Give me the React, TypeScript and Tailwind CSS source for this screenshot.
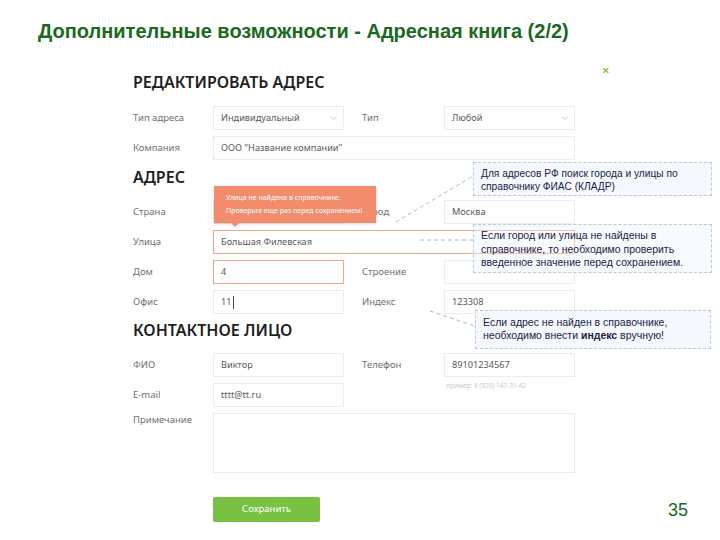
import React from "react";

const Chevron = () => (
  <svg width="7" height="4" viewBox="0 0 7 4" className="ml-auto mr-[6px]">
    <path d="M0.5 0.5 L3.5 3.3 L6.5 0.5" fill="none" stroke="#c8c8c8" strokeWidth="0.9" />
  </svg>
);

type FieldProps = { value?: string; select?: boolean; error?: boolean; wide?: boolean; cursor?: boolean };

const Field = ({ value = "", select, error, wide, cursor }: FieldProps) => (
  <div
    className={`h-[24px] ${wide ? "w-[362px]" : "w-[131px]"} flex items-center pl-[7px] text-[9.2px] text-[#5a5a5a] bg-white ${
      error ? "border border-[#f1a488]" : "border border-[#ececec]"
    }`}
  >
    <span>{value}</span>
    {cursor && <span className="ml-[1px] inline-block w-[1px] h-[13px] bg-[#444]" />}
    {select && <Chevron />}
  </div>
);

const Label = ({ text, second }: { text: string; second?: boolean }) => (
  <div className={`${second ? "w-[82px] ml-[18px]" : "w-[80px]"} text-[9.5px] text-[#707070] shrink-0`}>{text}</div>
);

const Heading = ({ text, className }: { text: string; className?: string }) => (
  <div className={`h-[17px] leading-[17px] text-[16px] font-semibold text-[#1f1f1f] ${className ?? ""}`}>{text}</div>
);

export default function App() {
  return (
    <div className="relative w-[720px] h-[540px] bg-white overflow-hidden font-['Noto_Sans',sans-serif]">
      <h1 className="pl-[38px] pt-[22px] h-[40px] leading-[19px] text-[20px] font-bold text-[#1a6a1e] font-['Liberation_Sans',Arial,sans-serif]">
        Дополнительные возможности - Адресная книга (2/2)
      </h1>

      <div className="ml-[133px] w-[443px] mt-[34px] flex flex-col">
        <div className="flex">
          <Heading text="РЕДАКТИРОВАТЬ АДРЕС" />
        </div>
        <div className="flex flex-col gap-[6px] mt-[15px]">
          <div className="flex items-center">
            <Label text="Тип адреса" />
            <Field value="Индивидуальный" select />
            <Label text="Тип" second />
            <Field value="Любой" select />
          </div>
          <div className="flex items-center">
            <Label text="Компания" />
            <Field value={'ООО "Название компании"'} wide />
          </div>
        </div>

        <Heading text="АДРЕС" className="mt-[9px]" />
        <div className="flex flex-col gap-[6px] mt-[14px]">
          <div className="flex items-center">
            <Label text="Страна" />
            <Field />
            <Label text="Город" second />
            <Field value="Москва" />
          </div>
          <div className="flex items-center">
            <Label text="Улица" />
            <Field value="Большая Филевская" wide error />
          </div>
          <div className="flex items-center">
            <Label text="Дом" />
            <Field value="4" error />
            <Label text="Строение" second />
            <Field />
          </div>
          <div className="flex items-center">
            <Label text="Офис" />
            <Field value="11" cursor />
            <Label text="Индекс" second />
            <Field value="123308" />
          </div>
        </div>

        <Heading text="КОНТАКТНОЕ ЛИЦО" className="mt-[8px]" />
        <div className="flex flex-col gap-[6px] mt-[14px]">
          <div className="flex items-center">
            <Label text="ФИО" />
            <Field value="Виктор" />
            <Label text="Телефон" second />
            <Field value="89101234567" />
          </div>
          <div className="flex items-start">
            <div className="flex items-center">
              <Label text="E-mail" />
              <Field value="tttt@tt.ru" />
            </div>
            <div className="ml-[102px] -mt-[2px] text-[6.5px] text-[#c8c8c8]">пример: 8 (920) 147-31-42</div>
          </div>
          <div className="flex items-start">
            <Label text="Примечание" />
            <div className="w-[362px] h-[60px] border border-[#ececec]" />
          </div>
        </div>
      </div>

      <div className="flex items-center mt-[24px]">
        <button className="ml-[213px] w-[107px] h-[25px] rounded-[2px] bg-[#79c143] text-white text-[9.5px]">Сохранить</button>
        <div className="ml-auto mr-[32px] text-[18px] leading-[18px] text-[#1a6a1e] font-['Liberation_Sans',Arial,sans-serif]">35</div>
      </div>

      {/* close */}
      <div className="absolute left-[602px] top-[64px] text-[13px] font-bold text-[#8cc152] leading-none">×</div>

      {/* error tooltip */}
      <div className="absolute left-[214px] top-[186px] w-[162px] h-[37px] bg-[#f28c6d] shadow-[0_1px_3px_rgba(0,0,0,0.15)] pl-[12px] pt-[6px] text-[7px] leading-[12.5px] text-white">
        <div>Улица не найдена в справочнике.</div>
        <div>Проверьте еще раз перед сохранением!</div>
        <div className="absolute left-[17px] -bottom-[4px] w-0 h-0 border-l-[4px] border-r-[4px] border-t-[4px] border-l-transparent border-r-transparent border-t-[#f28c6d]" />
      </div>

      {/* leader lines */}
      <svg className="absolute left-0 top-0 pointer-events-none" width="720" height="540">
        <g stroke="#a9bccd" strokeWidth="1" strokeDasharray="4 3" fill="none">
          <line x1="396" y1="222" x2="473" y2="176" />
          <line x1="420" y1="240" x2="473" y2="240" />
          <line x1="430" y1="311" x2="475" y2="326" />
        </g>
      </svg>

      {/* callouts */}
      <div className="absolute left-[473px] top-[162px] w-[239px] h-[34px] bg-[#f5f9fd] border border-dashed border-[#b7c9da] pl-[7px] pt-[4px] text-[10.2px] leading-[13px] text-[#18234a] font-['Liberation_Sans',Arial,sans-serif]">
        Для адресов РФ поиск города и улицы по справочнику ФИАС (КЛАДР)
      </div>
      <div className="absolute left-[473px] top-[224px] w-[239px] h-[49px] bg-[#eef5fb]/40 border border-dashed border-[#b7c9da] pl-[7px] pt-[4px] text-[10.5px] leading-[13.5px] text-[#18234a] font-['Liberation_Sans',Arial,sans-serif]">
        Если город или улица не найдены в справочнике, то необходимо проверить введенное значение перед сохранением.
      </div>
      <div className="absolute left-[475px] top-[310px] w-[236px] h-[39px] bg-[#f5f9fd] border border-dashed border-[#b7c9da] pl-[7px] pt-[5px] text-[10.5px] leading-[12.5px] text-[#18234a] font-['Liberation_Sans',Arial,sans-serif]">
        Если адрес не найден в справочнике, необходимо внести <b>индекс</b> вручную!
      </div>
    </div>
  );
}
